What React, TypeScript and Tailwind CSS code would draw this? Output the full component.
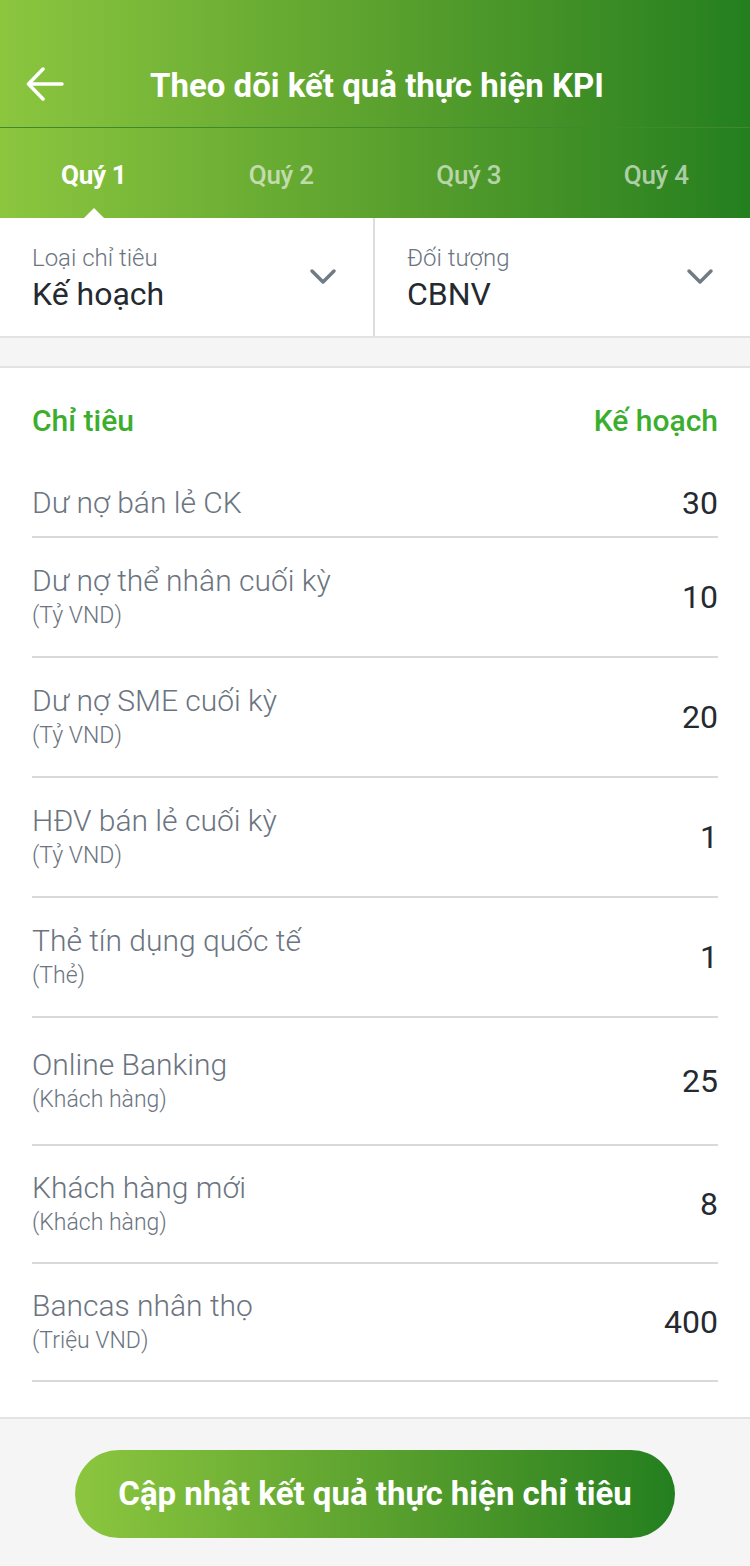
import React from 'react'

const rows = [
  { name: 'Dư nợ bán lẻ CK', unit: '', value: '30', h: 'h-[69px]' },
  { name: 'Dư nợ thể nhân cuối kỳ', unit: '(Tỷ VND)', value: '10', h: 'h-[120px]' },
  { name: 'Dư nợ SME cuối kỳ', unit: '(Tỷ VND)', value: '20', h: 'h-[120px]' },
  { name: 'HĐV bán lẻ cuối kỳ', unit: '(Tỷ VND)', value: '1', h: 'h-[120px]' },
  { name: 'Thẻ tín dụng quốc tế', unit: '(Thẻ)', value: '1', h: 'h-[120px]' },
  { name: 'Online Banking', unit: '(Khách hàng)', value: '25', h: 'h-[128px]' },
  { name: 'Khách hàng mới', unit: '(Khách hàng)', value: '8', h: 'h-[118px]' },
  { name: 'Bancas nhân thọ', unit: '(Triệu VND)', value: '400', h: 'h-[118px]' },
]

const Chevron = () => (
  <svg width="28" height="18" viewBox="0 0 28 18" fill="none">
    <path d="M3 3l11 11L25 3" stroke="#6f7b85" strokeWidth="3.5" strokeLinecap="round" strokeLinejoin="round" />
  </svg>
)

const App: React.FC = () => {
  return (
    <div className="w-[750px] h-[1566px] bg-white flex flex-col" style={{ fontFamily: 'Roboto, "Noto Sans", sans-serif' }}>
      {/* Header */}
      <div className="bg-gradient-to-r from-[#8cc63f] to-[#237f1f] h-[218px] flex flex-col">
        <div className="h-[128px] flex items-end pb-[26px] relative border-b border-[#3f8a2a]">
          <svg className="ml-[26px]" width="38" height="34" viewBox="0 0 38 34" fill="none">
            <path d="M36 17H3M17 2L2.5 17 17 32" stroke="white" strokeWidth="3.5" strokeLinecap="round" strokeLinejoin="round" />
          </svg>
          <div className="absolute left-[150px] top-[69px] text-white text-[33px] font-bold leading-none">
            Theo dõi kết quả thực hiện KPI
          </div>
        </div>
        <div className="flex-1 grid grid-cols-4">
          {['Quý 1', 'Quý 2', 'Quý 3', 'Quý 4'].map((q, i) => (
            <div key={q} className="relative flex items-center justify-center pt-[4px]">
              <span className={`text-[26px] tracking-[-0.3px] ${i === 0 ? 'text-white font-bold' : 'text-white/60 font-medium'}`}>{q}</span>
              {i === 0 && (
                <div className="absolute bottom-0 left-1/2 -translate-x-1/2 w-0 h-0 border-l-[10px] border-r-[10px] border-b-[10px] border-l-transparent border-r-transparent border-b-white" />
              )}
            </div>
          ))}
        </div>
      </div>

      {/* Filters */}
      <div className="h-[120px] grid grid-cols-2 border-b-2 border-[#e2e4e3]">
        {[
          { label: 'Loại chỉ tiêu', value: 'Kế hoạch' },
          { label: 'Đối tượng', value: 'CBNV' },
        ].map((f, i) => (
          <div key={f.label} className={`flex items-center justify-between pl-[32px] pr-[36px] ${i === 0 ? 'border-r-2 border-[#dcdedd]' : ''}`}>
            <div className="flex flex-col pt-[2px]">
              <span className="text-[24px] font-light text-[#6b7480] leading-[32px]">{f.label}</span>
              <span className="text-[32px] text-[#252a30] leading-[40px]">{f.value}</span>
            </div>
            <Chevron />
          </div>
        ))}
      </div>

      <div className="h-[30px] bg-[#f4f5f4] border-b-2 border-[#e2e4e3]" />

      {/* List */}
      <div className="flex-1 px-[32px] flex flex-col">
        <div className="h-[101px] flex justify-between items-center pt-[3px]">
          <span className="text-[30px] font-medium text-[#3cae2d]">Chỉ tiêu</span>
          <span className="text-[30px] font-medium text-[#3cae2d]">Kế hoạch</span>
        </div>
        {rows.map((r) => (
          <div key={r.name} className={`flex items-center justify-between border-b-2 border-[#d9d9d9] ${r.h}`}>
            <div className="flex flex-col">
              <span className="text-[30px] font-light text-[#6b7480] leading-[38px]">{r.name}</span>
              {r.unit && <span className="text-[23px] font-light text-[#6b7480] leading-[32px]">{r.unit}</span>}
            </div>
            <span className="text-[32px] text-[#252a30]">{r.value}</span>
          </div>
        ))}
      </div>

      {/* Footer */}
      <div className="h-[149px] bg-[#f4f5f4] border-t-2 border-[#e2e4e3] flex justify-center pt-[31px]">
        <button className="w-[600px] h-[88px] rounded-full bg-gradient-to-r from-[#8cc63f] to-[#237f1f] text-white text-[33px] font-bold">
          Cập nhật kết quả thực hiện chỉ tiêu
        </button>
      </div>
    </div>
  )
}

export default App
